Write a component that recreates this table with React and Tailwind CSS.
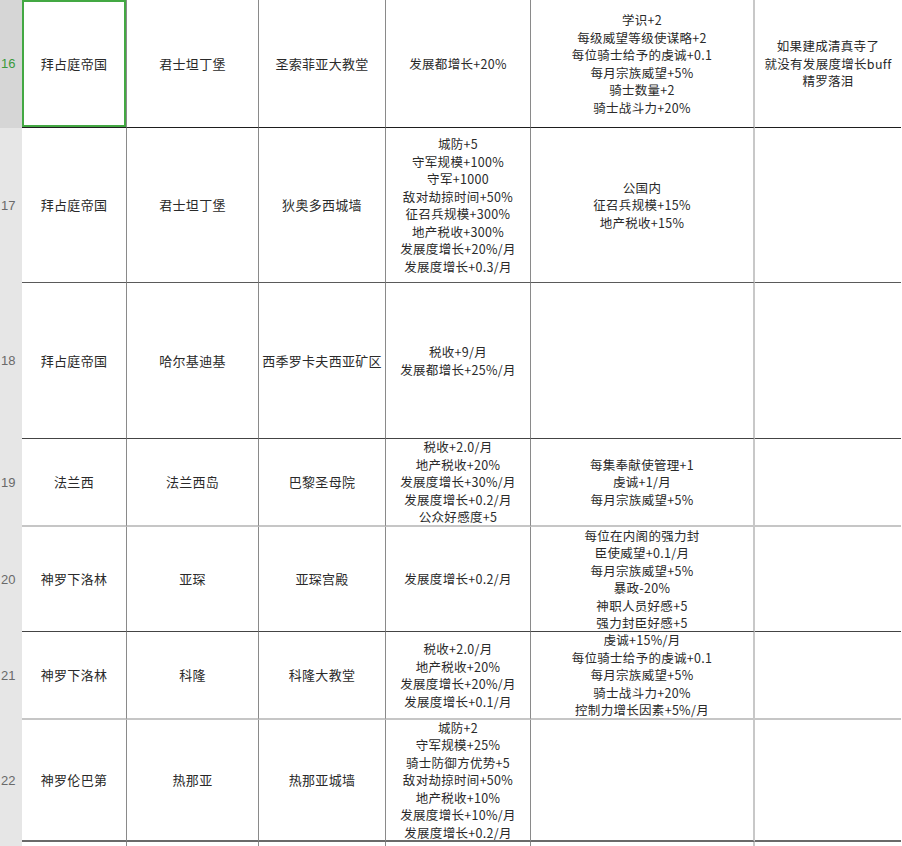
const rows = [
  {
    n: 16,
    h: "h-[128px]",
    line: "border-b border-b-[#1e1e1e]",
    cells: [
      ["拜占庭帝国"],
      ["君士坦丁堡"],
      ["圣索菲亚大教堂"],
      ["发展都增长+20%"],
      ["学识+2", "每级威望等级使谋略+2", "每位骑士给予的虔诚+0.1", "每月宗族威望+5%", "骑士数量+2", "骑士战斗力+20%"],
      ["如果建成清真寺了", "就没有发展度增长buff", "精罗落泪"],
    ],
  },
  {
    n: 17,
    h: "h-[155px]",
    line: "border-b border-b-[#5a5a5a]",
    cells: [
      ["拜占庭帝国"],
      ["君士坦丁堡"],
      ["狄奥多西城墙"],
      ["城防+5", "守军规模+100%", "守军+1000", "敌对劫掠时间+50%", "征召兵规模+300%", "地产税收+300%", "发展度增长+20%/月", "发展度增长+0.3/月"],
      ["公国内", "征召兵规模+15%", "地产税收+15%"],
      [],
    ],
  },
  {
    n: 18,
    h: "h-[156px]",
    line: "border-b border-b-[#444]",
    cells: [
      ["拜占庭帝国"],
      ["哈尔基迪基"],
      ["西季罗卡夫西亚矿区"],
      ["税收+9/月", "发展都增长+25%/月"],
      [],
      [],
    ],
  },
  {
    n: 19,
    h: "h-[88px]",
    line: "border-b-2 border-b-[#c6c6c6]",
    cells: [
      ["法兰西"],
      ["法兰西岛"],
      ["巴黎圣母院"],
      ["税收+2.0/月", "地产税收+20%", "发展度增长+30%/月", "发展度增长+0.2/月", "公众好感度+5"],
      ["每集奉献使管理+1", "虔诚+1/月", "每月宗族威望+5%"],
      [],
    ],
  },
  {
    n: 20,
    h: "h-[105px]",
    line: "border-b border-b-[#444]",
    cells: [
      ["神罗下洛林"],
      ["亚琛"],
      ["亚琛宫殿"],
      ["发展度增长+0.2/月"],
      ["每位在内阁的强力封", "臣使威望+0.1/月", "每月宗族威望+5%", "暴政-20%", "神职人员好感+5", "强力封臣好感+5"],
      [],
    ],
  },
  {
    n: 21,
    h: "h-[88px]",
    line: "border-b-2 border-b-[#c6c6c6]",
    cells: [
      ["神罗下洛林"],
      ["科隆"],
      ["科隆大教堂"],
      ["税收+2.0/月", "地产税收+20%", "发展度增长+20%/月", "发展度增长+0.1/月"],
      ["虔诚+15%/月", "每位骑士给予的虔诚+0.1", "每月宗族威望+5%", "骑士战斗力+20%", "控制力增长因素+5%/月"],
      [],
    ],
  },
  {
    n: 22,
    h: "h-[122px]",
    line: "border-b-2 border-b-[#6a6a6a]",
    cells: [
      ["神罗伦巴第"],
      ["热那亚"],
      ["热那亚城墙"],
      ["城防+2", "守军规模+25%", "骑士防御方优势+5", "敌对劫掠时间+50%", "地产税收+10%", "发展度增长+10%/月", "发展度增长+0.2/月"],
      [],
      [],
    ],
  },
];

const cols = "grid grid-cols-[22px_105px_132px_127px_145px_224px_146px]";
const font = { fontFamily: '"Noto Sans CJK SC", "Liberation Sans", sans-serif' };

const Row = ({ row }) => {
  const sel = row.n === 16;
  return (
    <div className={`${cols} ${row.h}`}>
      <div
        className={`flex items-center pl-[1px] text-[13px] ${
          sel ? "bg-[#d6d6d6] text-[#3a9a3a]" : "bg-[#e6e6e6] text-[#6a6a6a]"
        }`}
        style={{ fontFamily: '"Liberation Sans", sans-serif' }}
      >
        {row.n}
      </div>
      {row.cells.map((lines, i) => (
        <div
          key={i}
          className={`relative flex flex-col items-center justify-center overflow-hidden text-center leading-[17.5px] text-[#2a2a2a] bg-white ${
            i < 3 ? "text-[13px]" : "text-[12.5px]"
          } ${row.line} ${
            i === 5
              ? "border-r-0"
              : i === 4
              ? "border-r-2 border-r-[#c8c8c8]"
              : "border-r border-r-[#8a8a8a]"
          }`}
          style={font}
        >
          {lines.map((t) => (
            <div key={t} className="whitespace-nowrap tracking-[0.3px]">
              {t}
            </div>
          ))}
          {sel && i === 0 && (
            <div className="absolute inset-0 border-2 border-[#43a843] pointer-events-none" />
          )}
        </div>
      ))}
    </div>
  );
};

export default function App() {
  return (
    <div className="w-[902px] h-[846px] overflow-hidden bg-white">
      {rows.map((r) => (
        <Row key={r.n} row={r} />
      ))}
      <div className={`${cols} h-[10px]`}>
        <div className="bg-[#e6e6e6]" />
        <div className="border-r border-r-[#8a8a8a]" />
        <div className="border-r border-r-[#8a8a8a]" />
        <div className="border-r border-r-[#8a8a8a]" />
        <div className="border-r border-r-[#8a8a8a]" />
        <div className="border-r-2 border-r-[#c8c8c8]" />
        <div />
      </div>
    </div>
  );
}
